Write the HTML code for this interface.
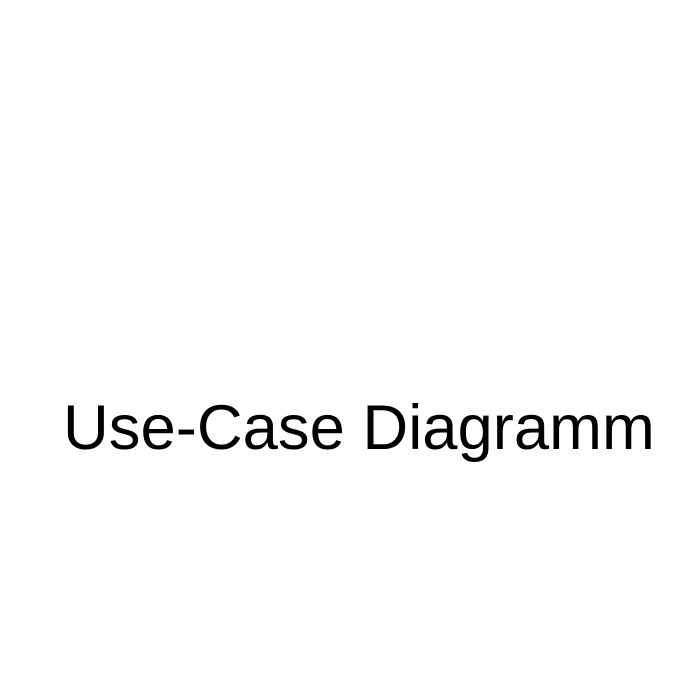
<!DOCTYPE html>
<html>
<head>
<meta charset="utf-8">
<style>
html,body{margin:0;padding:0;background:#fff;width:700px;height:700px;overflow:hidden;}
.t{position:absolute;left:63px;top:396px;font-family:"Liberation Sans",sans-serif;font-size:63.4px;line-height:64px;color:#000;white-space:nowrap;}
</style>
</head>
<body>
<div class="t">Use-Case Diagramm</div>
</body>
</html>
